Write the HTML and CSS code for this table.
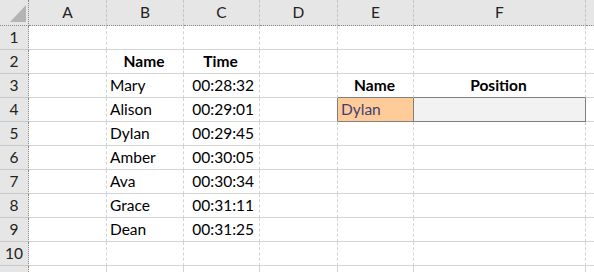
FILE: index.html
```html
<!DOCTYPE html>
<html lang="en">
<head>
  <meta charset="UTF-8">
  <meta name="viewport" content="width=device-width, initial-scale=1.0">
  <title>Race Results</title>
  <link rel="stylesheet" href="styles.css">
</head>
<body>
  <div class="sheet">
    <!-- column headers -->
    <div class="hd corner">
      <svg width="29" height="25" viewBox="0 0 29 25"><polygon points="26,5 26,22 10,22" fill="#b4b4b4"/></svg>
    </div>
    <div class="hd col">A</div>
    <div class="hd col">B</div>
    <div class="hd col">C</div>
    <div class="hd col">D</div>
    <div class="hd col">E</div>
    <div class="hd col">F</div>
    <div class="hd col last"></div>

    <!-- row 1 -->
    <div class="rn">1</div>
    <div class="c"></div><div class="c"></div><div class="c"></div><div class="c"></div><div class="c"></div><div class="c"></div><div class="c last"></div>

    <!-- row 2 -->
    <div class="rn">2</div>
    <div class="c"></div>
    <div class="c head">Name</div>
    <div class="c head">Time</div>
    <div class="c"></div><div class="c"></div><div class="c"></div><div class="c last"></div>

    <!-- row 3 -->
    <div class="rn">3</div>
    <div class="c"></div>
    <div class="c">Mary</div>
    <div class="c num">00:28:32</div>
    <div class="c"></div>
    <div class="c head box-top">Name</div>
    <div class="c head box-top">Position</div>
    <div class="c last"></div>

    <!-- row 4 -->
    <div class="rn">4</div>
    <div class="c"></div>
    <div class="c">Alison</div>
    <div class="c num">00:29:01</div>
    <div class="c box-left"></div>
    <div class="c input">Dylan</div>
    <div class="c calc"></div>
    <div class="c last"></div>

    <!-- row 5 -->
    <div class="rn">5</div>
    <div class="c"></div>
    <div class="c">Dylan</div>
    <div class="c num">00:29:45</div>
    <div class="c"></div><div class="c"></div><div class="c"></div><div class="c last"></div>

    <!-- row 6 -->
    <div class="rn">6</div>
    <div class="c"></div>
    <div class="c">Amber</div>
    <div class="c num">00:30:05</div>
    <div class="c"></div><div class="c"></div><div class="c"></div><div class="c last"></div>

    <!-- row 7 -->
    <div class="rn">7</div>
    <div class="c"></div>
    <div class="c">Ava</div>
    <div class="c num">00:30:34</div>
    <div class="c"></div><div class="c"></div><div class="c"></div><div class="c last"></div>

    <!-- row 8 -->
    <div class="rn">8</div>
    <div class="c"></div>
    <div class="c">Grace</div>
    <div class="c num">00:31:11</div>
    <div class="c"></div><div class="c"></div><div class="c"></div><div class="c last"></div>

    <!-- row 9 -->
    <div class="rn">9</div>
    <div class="c"></div>
    <div class="c">Dean</div>
    <div class="c num">00:31:25</div>
    <div class="c"></div><div class="c"></div><div class="c"></div><div class="c last"></div>

    <!-- row 10 -->
    <div class="rn">10</div>
    <div class="c"></div><div class="c"></div><div class="c"></div><div class="c"></div><div class="c"></div><div class="c"></div><div class="c last"></div>

    <!-- next row, only its top edge shows -->
    <div class="rn stub"></div>
    <div class="c stub"></div><div class="c stub"></div><div class="c stub"></div><div class="c stub"></div><div class="c stub"></div><div class="c stub"></div><div class="c stub last"></div>
  </div>
</body>
</html>
```

FILE: styles.css
```css
body {
  margin: 0;
  background: #ffffff;
  overflow: hidden;
  font-family: Lato, "Open Sans", sans-serif;
  font-size: 15.5px;
  color: #000000;
}

.sheet {
  display: grid;
  grid-template-columns: 29px 78px 77px 76px 78px 76px 172px 1fr;
  grid-template-rows: 26px repeat(10, 24px) 6px;
  width: 594px;
  height: 272px;
  overflow: hidden;
}

/* header strip */
.hd {
  background: #e6e6e6;
  border-bottom: 1px dotted #8a8a8a;
  border-right: 1px dashed #c4c4c4;
  line-height: 25px;
  text-align: center;
  color: #222;
  overflow: hidden;
}

.corner {
  border-right: 1px dotted #8a8a8a;
}

.corner svg {
  display: block;
}

/* row numbers */
.rn {
  background: #e6e6e6;
  border-right: 1px dotted #8a8a8a;
  border-bottom: 1px solid #c8c8c8;
  line-height: 23px;
  text-align: center;
  color: #222;
}

/* cells */
.c {
  border-right: 1px dashed #d2d2d2;
  border-bottom: 1px solid #d4d4d4;
  line-height: 23px;
  padding: 0 5px 0 3px;
  white-space: nowrap;
  overflow: hidden;
}

.stub {
  border-bottom: none;
}

.last {
  border-right: none;
}

.head {
  font-weight: bold;
  text-align: center;
}

.num {
  text-align: right;
}

/* lookup box */
.box-top {
  border-bottom: 1px solid #7f7f7f;
}

.box-left {
  border-right: 1px solid #7f7f7f;
}

.input {
  background: #ffcc99;
  color: #3f3f76;
  border-right: 1px solid #7f7f7f;
  border-bottom: 1px solid #7f7f7f;
}

.calc {
  background: #f2f2f2;
  border-right: 1px solid #7f7f7f;
  border-bottom: 1px solid #7f7f7f;
}
```
